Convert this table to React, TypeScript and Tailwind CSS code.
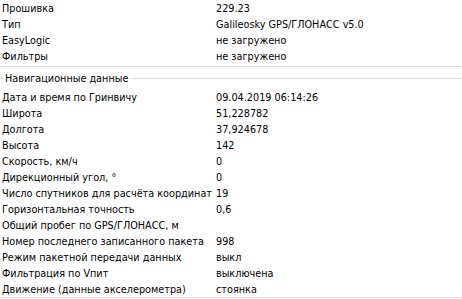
const top = [
  ['Прошивка', '229.23'],
  ['Тип', 'Galileosky GPS/ГЛОНАСС v5.0'],
  ['EasyLogic', 'не загружено'],
  ['Фильтры', 'не загружено'],
]

const nav = [
  ['Дата и время по Гринвичу', '09.04.2019 06:14:26'],
  ['Широта', '51,228782'],
  ['Долгота', '37,924678'],
  ['Высота', '142'],
  ['Скорость, км/ч', '0'],
  ['Дирекционный угол, °', '0'],
  ['Число спутников для расчёта координат', '19'],
  ['Горизонтальная точность', '0,6'],
  ['Общий пробег по GPS/ГЛОНАСС, м', ''],
  ['Номер последнего записанного пакета', '998'],
  ['Режим пакетной передачи данных', 'выкл'],
  ['Фильтрация по Vпит', 'выключена'],
  ['Движение (данные акселерометра)', 'стоянка'],
]

function Row({ label, value }: { label: string; value: string }) {
  return (
    <div className="grid grid-cols-[216px_1fr] h-4 items-center whitespace-nowrap">
      <div className="pl-[2px]">{label}</div>
      <div>{value}</div>
    </div>
  )
}

export default function App() {
  return (
    <div className="w-[462px] h-[299px] bg-white text-black text-[9.7px] leading-4 font-['DejaVu_Sans',sans-serif] overflow-hidden">
      <div className="pt-[1px]">
        {top.map(([l, v]) => (
          <Row key={l} label={l} value={v} />
        ))}
      </div>
      <div className="mt-[1px] h-px bg-[#d5dde5]" />
      <div className="flex items-center h-[23px]">
        <div className="w-[4px] h-px bg-[#d5dde5]" />
        <span className="ml-[1px] mr-[4px]">Навигационные данные</span>
        <div className="flex-1 h-px bg-[#d5dde5]" />
      </div>
      <div>
        {nav.map(([l, v]) => (
          <Row key={l} label={l} value={v} />
        ))}
      </div>
      <div className="-mt-[1px] h-px bg-[#d5dde5]" />
    </div>
  )
}
